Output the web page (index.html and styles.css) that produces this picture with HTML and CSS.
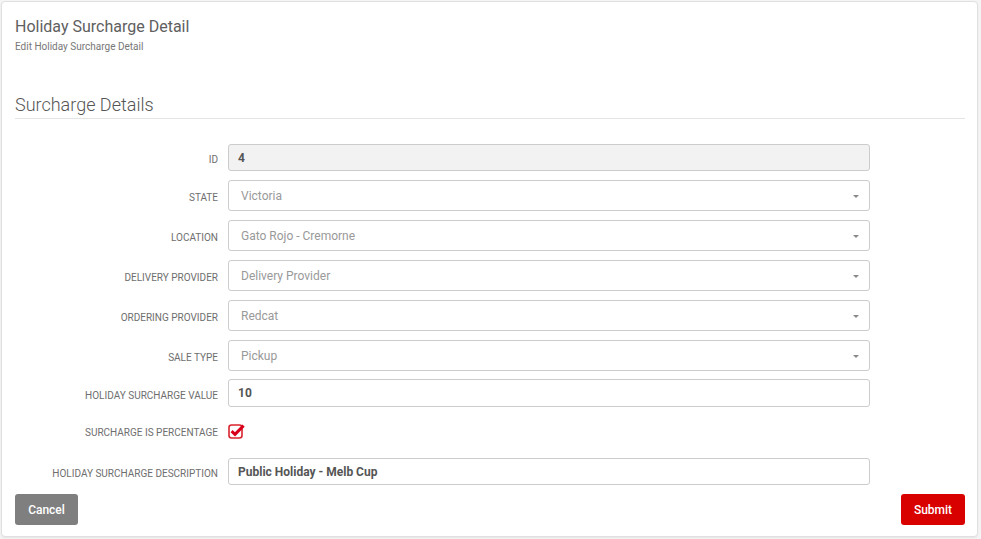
FILE: index.html
```html
<!DOCTYPE html>
<html lang="en">
<head>
<meta charset="UTF-8">
<meta name="viewport" content="width=device-width, initial-scale=1.0">
<title>Holiday Surcharge Detail</title>
<link rel="stylesheet" href="styles.css">
</head>
<body>

<div class="card">
  <div class="page-head">
    <h1 class="page-title">Holiday Surcharge Detail</h1>
    <div class="page-sub">Edit Holiday Surcharge Detail</div>
  </div>

  <h2 class="section-title">Surcharge Details</h2>

  <form class="form">
    <div class="row">
      <label class="label">ID</label>
      <div class="field field-readonly">4</div>
    </div>
    <div class="row">
      <label class="label">State</label>
      <div class="field field-select">Victoria<span class="caret"></span></div>
    </div>
    <div class="row">
      <label class="label">Location</label>
      <div class="field field-select">Gato Rojo - Cremorne<span class="caret"></span></div>
    </div>
    <div class="row">
      <label class="label">Delivery Provider</label>
      <div class="field field-select">Delivery Provider<span class="caret"></span></div>
    </div>
    <div class="row">
      <label class="label">Ordering Provider</label>
      <div class="field field-select">Redcat<span class="caret"></span></div>
    </div>
    <div class="row row-tight">
      <label class="label">Sale Type</label>
      <div class="field field-select">Pickup<span class="caret"></span></div>
    </div>
    <div class="row">
      <label class="label">Holiday Surcharge Value</label>
      <div class="field field-input">10</div>
    </div>
    <div class="row row-check">
      <label class="label">Surcharge Is Percentage</label>
      <div class="check">
        <svg width="17" height="16" viewBox="0 0 17 16">
          <rect x="1" y="2" width="13" height="13" rx="2.5" fill="none" stroke="#d9232d" stroke-width="1.6"/>
          <path d="M3.6 8.2 L7 11.4 L15.6 2.6" fill="none" stroke="#d9001b" stroke-width="3" stroke-linejoin="miter"/>
        </svg>
      </div>
    </div>
    <div class="row">
      <label class="label">Holiday Surcharge Description</label>
      <div class="field field-input field-desc">Public Holiday - Melb Cup</div>
    </div>

    <div class="actions">
      <button type="button" class="btn btn-cancel">Cancel</button>
      <button type="button" class="btn btn-submit">Submit</button>
    </div>
  </form>
</div>

</body>
</html>
```

FILE: styles.css
```css
body {
  margin: 0;
  padding: 1px 3px 2px 1px;
  font-family: Roboto, "Liberation Sans", sans-serif;
  background-color: #f4f4f4;
}
.card {
  height: 536px;
  box-sizing: border-box;
  padding: 14px 12px 12px 13px;
  background-color: #fff;
  border: 1px solid #e0e0e0;
  border-radius: 4px;
  box-shadow: 0 1px 2px rgba(0,0,0,0.06);
}
.page-title {
  margin: 0;
  font-size: 16px;
  font-weight: 400;
  line-height: 22px;
  color: #606060;
}
.page-sub {
  margin-top: 2px;
  font-size: 10px;
  line-height: 14px;
  color: #777;
}
.section-title {
  margin: 40px 0 0 0;
  padding-bottom: 2px;
  font-size: 18px;
  font-weight: 300;
  line-height: 22px;
  color: #555;
  border-bottom: 1px solid #e4e4e4;
}
.form {
  margin-top: 25px;
}
.row {
  display: grid;
  grid-template-columns: 203px 642px;
  column-gap: 10px;
  align-items: center;
  margin-bottom: 9px;
}
.row-tight {
  margin-bottom: 8px;
}
.label {
  text-align: right;
  text-transform: uppercase;
  font-size: 10px;
  color: #6e6e6e;
  padding-top: 4px;
}
.field {
  position: relative;
  box-sizing: border-box;
  border: 1px solid #ccc;
  border-radius: 3px;
  font-size: 12px;
  color: #555;
  display: flex;
  align-items: center;
}
.field-readonly {
  height: 27px;
  padding-left: 9px;
  background-color: #f2f2f2;
  font-weight: bold;
}
.field-select {
  height: 31px;
  padding-left: 12px;
  color: #999;
}
.field-input {
  height: 28px;
  padding-left: 9px;
  font-weight: bold;
}
.field-desc {
  height: 27px;
}
.caret {
  position: absolute;
  right: 10px;
  top: 14px;
  width: 0;
  height: 0;
  border-left: 3px solid transparent;
  border-right: 3px solid transparent;
  border-top: 3px solid #888;
}
.row-check {
  height: 33px;
}
.row-check .label {
  padding-top: 0;
}
.check {
  display: flex;
  align-items: center;
  height: 16px;
  margin-top: -4px;
}
.actions {
  display: flex;
  justify-content: space-between;
}
.btn {
  height: 31px;
  border: none;
  border-radius: 3px;
  font-family: Roboto, "Liberation Sans", sans-serif;
  font-size: 12px;
  font-weight: 500;
  color: #fff;
  cursor: pointer;
}
.btn-cancel {
  width: 63px;
  background-color: #7f7f7f;
}
.btn-submit {
  width: 64px;
  background-color: #d90000;
}
```
